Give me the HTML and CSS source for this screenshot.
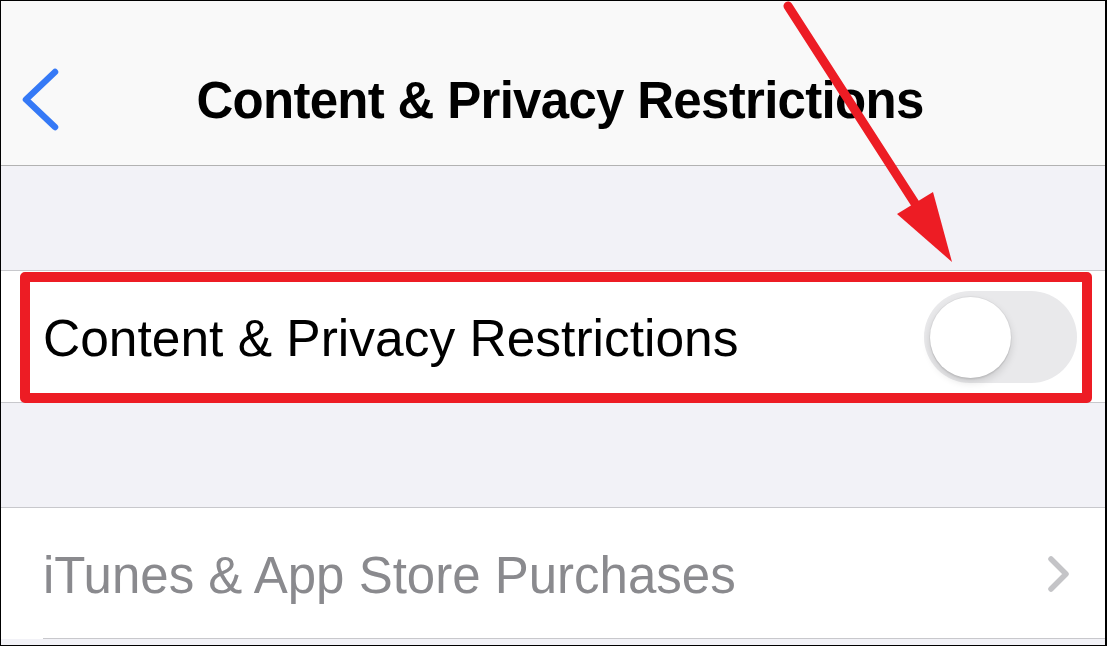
FILE: index.html
```html
<!DOCTYPE html>
<html lang="en">
<head>
    <meta charset="UTF-8">
    <meta name="viewport" content="width=device-width, initial-scale=1.0">
    <title>Content &amp; Privacy Restrictions</title>
    <link rel="stylesheet" href="styles.css">
</head>
<body>
    <div class="screen">
        <div class="nav">
            <div class="nav-left">
                <svg class="back" width="44" height="66" viewBox="0 0 44 66">
                    <path d="M35 5 L6 32.5 L35 60" fill="none" stroke="#3579f6" stroke-width="6.5" stroke-linecap="round" stroke-linejoin="round"/>
                </svg>
            </div>
            <div class="title">Content &amp; Privacy Restrictions</div>
            <div></div>
        </div>

        <div class="spacer"></div>

        <div class="row row-toggle">
            <span class="label">Content &amp; Privacy Restrictions</span>
            <div class="switch"><div class="knob"></div></div>
        </div>

        <div class="spacer"></div>

        <div class="row row-link">
            <span class="label dim">iTunes &amp; App Store Purchases</span>
            <svg class="chevron" width="24" height="38" viewBox="0 0 24 38">
                <path d="M4 4 L19 19 L4 34" fill="none" stroke="#c4c4c7" stroke-width="5.5" stroke-linecap="round" stroke-linejoin="round"/>
            </svg>
        </div>

        <!-- annotation overlay -->
        <div class="highlight"></div>
        <svg class="arrow" width="1107" height="646" viewBox="0 0 1107 646">
            <line x1="788" y1="6" x2="918" y2="208" stroke="#ed1c24" stroke-width="9" stroke-linecap="round"/>
            <polygon points="952,262 897,214 933,192" fill="#ed1c24"/>
        </svg>
    </div>
</body>
</html>
```

FILE: styles.css
```css
body {
    margin: 0;
    font-family: "Liberation Sans", Arial, sans-serif;
}
.screen {
    position: relative;
    width: 1107px;
    height: 646px;
    box-sizing: border-box;
    border: 1px solid #000;
    border-right-width: 2px;
    background: #f2f2f7;
    overflow: hidden;
}
.nav {
    height: 165px;
    box-sizing: border-box;
    padding: 34px 0 0 14px;
    display: grid;
    grid-template-columns: 1fr auto 1fr;
    align-items: center;
    background: #f9f9f9;
    border-bottom: 1px solid #b2b2b2;
}
.nav-left {
    display: flex;
    align-items: center;
}
.back {
    margin-left: 5px;
}
.title {
    font-size: 51px;
    font-weight: bold;
    letter-spacing: -0.7px;
    color: #000;
}
.spacer {
    height: 104px;
}
.row {
    background: #fff;
    display: flex;
    align-items: center;
    justify-content: space-between;
    padding: 0 28px 0 42px;
    border-top: 1px solid #c8c8cc;
}
.row-toggle {
    height: 131px;
    border-bottom: 1px solid #c8c8cc;
}
.row-link {
    height: 131px;
    padding-right: 34px;
    background: linear-gradient(#c8c8cc, #c8c8cc) no-repeat 42px 100% / calc(100% - 42px) 1px, #fff;
}
.label {
    font-size: 51.5px;
    color: #000;
    padding-top: 3px;
}
.dim {
    font-size: 51px;
    color: #8a8a8e;
}
.switch {
    width: 153px;
    height: 92px;
    box-sizing: border-box;
    padding: 6px;
    border-radius: 46px;
    background: #e9e9eb;
}
.knob {
    width: 81px;
    height: 81px;
    border-radius: 50%;
    background: #fff;
    box-shadow: 0 4px 8px rgba(0, 0, 0, 0.14), 0 2px 1px rgba(0, 0, 0, 0.06), 0 0 0 1px rgba(0, 0, 0, 0.04);
}
.highlight {
    position: absolute;
    left: 19px;
    top: 271px;
    width: 1072px;
    height: 131px;
    box-sizing: border-box;
    border: 10px solid #ed1c24;
    border-radius: 5px;
}
.arrow {
    position: absolute;
    left: -1px;
    top: -1px;
}
```
